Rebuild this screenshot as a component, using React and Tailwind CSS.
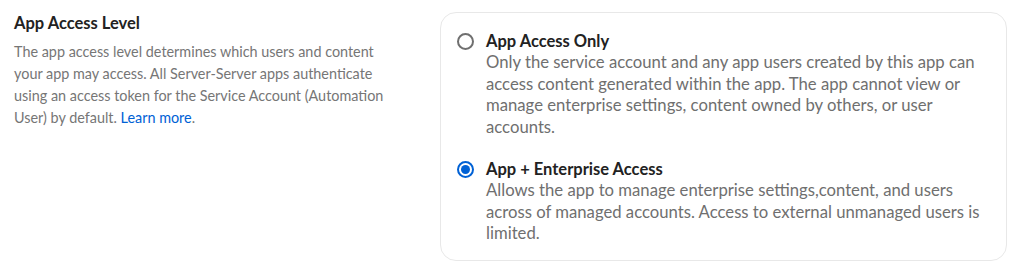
import React from "react";

const Radio = ({ checked }) =>
  checked ? (
    <span className="mt-[3px] flex h-[17px] w-[17px] shrink-0 items-center justify-center rounded-full border-2 border-[#0061d5]">
      <span className="h-[9px] w-[9px] rounded-full bg-[#0061d5]" />
    </span>
  ) : (
    <span className="mt-[3px] h-[17px] w-[17px] shrink-0 rounded-full border-2 border-[#6f6f6f]" />
  );

const Option = ({ checked, title, children }) => (
  <div className="flex gap-[12px]">
    <Radio checked={checked} />
    <div>
      <div className="text-[16.5px] font-bold leading-[22px] text-[#222]">{title}</div>
      <p className="text-[16.7px] leading-[21.7px] text-[#6f6f6f]">{children}</p>
    </div>
  </div>
);

export default function App() {
  return (
    <div className="flex w-[1024px] bg-white pt-3 pl-[14px] pr-[17px] font-['Lato','Noto_Sans',sans-serif]">
      {/* Description */}
      <div className="w-[385px]">
        <h2 className="text-[16.5px] font-bold leading-[22px] text-[#222]">App Access Level</h2>
        <p className="mt-[7px] text-[14.4px] leading-[22px] text-[#767676]">
          The app access level determines which users and content your app may access. All
          Server-Server apps authenticate using an access token for the Service Account
          (Automation User) by default. <a className="text-[#0061d5]" href="#">Learn more</a>.
        </p>
      </div>

      {/* Options */}
      <div className="ml-auto flex w-[567px] flex-col gap-[19px] rounded-2xl border border-[#e8e8e8] pt-[17px] pb-[15px] pl-4 pr-4">
        <Option title="App Access Only">
          Only the service account and any app users created by this app can access content
          generated within the app. The app cannot view or manage enterprise settings, content
          owned by others, or user accounts.
        </Option>
        <Option checked title="App + Enterprise Access">
          Allows the app to manage enterprise settings,content, and users across of managed
          accounts. Access to external unmanaged users is limited.
        </Option>
      </div>
    </div>
  );
}
